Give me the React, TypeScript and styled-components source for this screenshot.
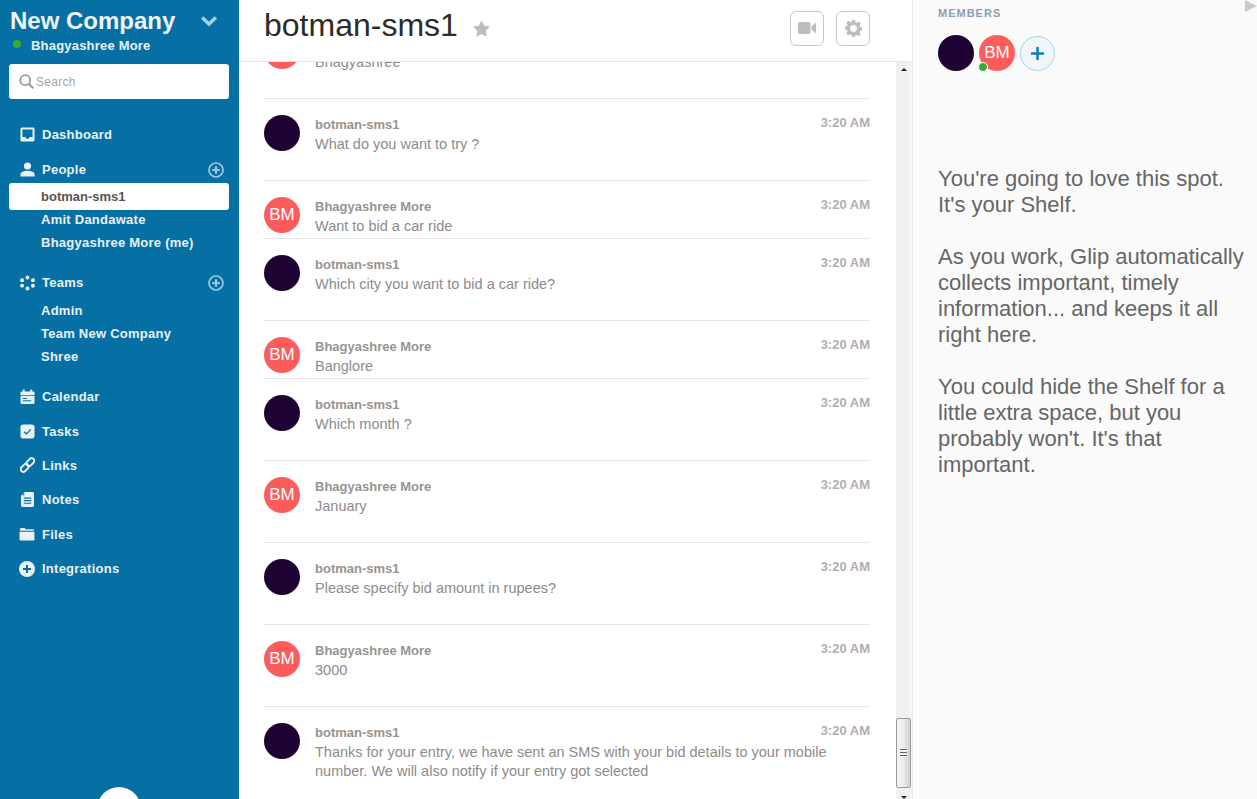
import React from "react";
import styled, { createGlobalStyle } from "styled-components";

const Global = createGlobalStyle`
  html, body { margin: 0; padding: 0; height: 100%; overflow: hidden; background: #fff; }
  body { font-family: "Liberation Sans", Arial, sans-serif; }
  * { box-sizing: border-box; }
`;

const Page = styled.div`
  display: flex;
  width: 1257px;
  height: 799px;
  overflow: hidden;
`;

const Sidebar = styled.aside`
  position: relative;
  width: 239px;
  flex: none;
  background: #0670a4;
  color: #e9f1f5;
  overflow: hidden;
  padding: 0 10px 0 9px;
`;

const CompanyRow = styled.div`
  display: flex;
  align-items: center;
  justify-content: space-between;
  height: 34px;
  padding: 8px 12px 0 1px;
  font-size: 24px;
  font-weight: 700;
  color: #eef3f6;
`;

const UserRow = styled.div`
  display: flex;
  align-items: center;
  height: 22px;
  padding-left: 4px;
  margin-bottom: 8px;
  font-size: 13px;
  font-weight: 700;
  letter-spacing: 0.2px;
  color: #e9f1f5;
`;

const StatusDot = styled.span`
  width: 8px;
  height: 8px;
  border-radius: 50%;
  background: #3da935;
  margin-right: 10px;
  position: relative;
  top: -1px;
`;

const SearchBox = styled.div`
  display: flex;
  align-items: center;
  gap: 2px;
  height: 35px;
  padding-left: 10px;
  background: #fff;
  border-radius: 3px;
  font-size: 12px;
  letter-spacing: 0.3px;
  color: #a5a5a5;
  margin-bottom: 18px;
`;

const NavRow = styled.div<{ $h?: number; $top?: number }>`
  display: flex;
  align-items: center;
  height: ${(p) => p.$h ?? 34.4}px;
  padding: ${(p) => p.$top ?? 0}px 5px 0 10px;
  font-size: 13px;
  font-weight: 700;
  letter-spacing: 0.25px;
`;

const NavIcon = styled.span`
  display: flex;
  align-items: center;
  justify-content: center;
  width: 16px;
  height: 16px;
  margin-right: 7px;
`;

const NavLabel = styled.span`
  flex: 1;
`;

const SubList = styled.div<{ $after: number }>`
  margin-bottom: ${(p) => p.$after}px;
`;

const SubItem = styled.div<{ $active?: boolean }>`
  display: flex;
  align-items: center;
  height: ${(p) => (p.$active ? 27 : 23)}px;
  margin-bottom: ${(p) => (p.$active ? -2 : 0)}px;
  padding-left: 32px;
  border-radius: 3px;
  font-size: 13px;
  font-weight: 700;
  letter-spacing: ${(p) => (p.$active ? 0 : 0.25)}px;
  background: ${(p) => (p.$active ? "#fff" : "transparent")};
  color: ${(p) => (p.$active ? "#5b5353" : "#e9f1f5")};
`;

const BottomBubble = styled.div`
  position: absolute;
  left: 97px;
  top: 787px;
  width: 44px;
  height: 44px;
  border-radius: 50%;
  background: #fff;
`;

const Main = styled.main`
  width: 673px;
  flex: none;
  display: flex;
  flex-direction: column;
  background: #fff;
`;

const Header = styled.header`
  display: flex;
  align-items: center;
  height: 62px;
  flex: none;
  padding: 0 42px 5px 25px;
  border-bottom: 1px solid #e6e6e6;
  position: relative;
  z-index: 1;
  background: #fff;
`;

const Title = styled.h1`
  margin: 0 0 5px;
  font-size: 32px;
  font-weight: 400;
  color: #2b2b2b;
`;

const StarWrap = styled.span`
  display: flex;
  margin-left: 15px;
  flex: 1;
`;

const HeaderButton = styled.button`
  display: flex;
  align-items: center;
  justify-content: center;
  width: 34px;
  height: 35px;
  margin-left: 12px;
  padding: 0;
  border: 1px solid #c8c8c8;
  border-radius: 6px;
  background: #fff;
`;

const ChatArea = styled.div`
  flex: 1;
  min-height: 0;
  display: flex;
`;

const MessageViewport = styled.div`
  flex: 1;
  min-width: 0;
  overflow: hidden;
  padding: 0 26px 0 25px;
`;

const MessageList = styled.div`
  margin-top: -46px;
`;

const Message = styled.article<{ $h: number; $first?: boolean }>`
  display: flex;
  height: ${(p) => p.$h}px;
  padding-top: 16px;
  border-top: ${(p) => (p.$first ? "0" : "1px solid #e6e6e6")};
  margin-top: ${(p) => (p.$first ? "1px" : "0")};
`;

const Avatar = styled.div<{ $kind: "dark" | "red" }>`
  display: flex;
  align-items: center;
  justify-content: center;
  width: 36px;
  height: 36px;
  flex: none;
  border-radius: 50%;
  background: ${(p) => (p.$kind === "dark" ? "#1e0233" : "#fd5c5c")};
  color: #fff;
  font-size: 17px;
`;

const MessageBody = styled.div`
  flex: 1;
  min-width: 0;
  margin-left: 15px;
  padding-top: 1px;
`;

const MessageHead = styled.div`
  display: flex;
  justify-content: space-between;
  align-items: flex-start;
  height: 19px;
  line-height: 18px;
`;

const Author = styled.span`
  font-size: 13px;
  font-weight: 700;
  color: #9a9290;
`;

const Time = styled.span`
  font-size: 13px;
  font-weight: 700;
  color: #b3aeac;
  position: relative;
  top: -2px;
`;

const MessageText = styled.div`
  font-size: 14.5px;
  line-height: 19px;
  color: #8d8b8b;
`;

const Scrollbar = styled.div`
  width: 16px;
  flex: none;
  display: flex;
  flex-direction: column;
  align-items: flex-start;
  background: linear-gradient(to right, #f0f0f0 0 14px, #f8f8f8 14px);
`;

const ScrollSpacer = styled.div`
  flex: 1;
`;

const ScrollArrow = styled.div<{ $down?: boolean }>`
  width: 15px;
  height: ${(p) => (p.$down ? 11 : 15)}px;
  flex: none;
  display: flex;
  align-items: ${(p) => (p.$down ? "flex-start" : "center")};
  justify-content: center;
  padding-top: ${(p) => (p.$down ? 8 : 0)}px;
  &::before {
    content: "";
    border-left: 3.5px solid transparent;
    border-right: 3.5px solid transparent;
    ${(p) => (p.$down ? "border-top: 3.5px solid #222;" : "border-bottom: 3.5px solid #222;")}
  }
`;

const ScrollThumb = styled.div`
  width: 15px;
  height: 70px;
  flex: none;
  display: flex;
  align-items: center;
  justify-content: center;
  border: 1px solid #9a9a9a;
  border-radius: 2px;
  background: linear-gradient(to right, #f4f4f4 0%, #ececec 50%, #cfcfcf 100%);
`;

const Grip = styled.div`
  width: 7px;
  height: 8px;
  background: repeating-linear-gradient(to bottom, #666 0 1px, #eee 1px 3px);
`;

const Shelf = styled.section`
  position: relative;
  flex: 1;
  min-width: 0;
  background: #fafafa;
  border-left: 1px solid #ececec;
  padding: 7px 8px 0 25px;
`;

const ShelfToggle = styled.div`
  position: absolute;
  right: 0;
  top: 0;
  border-left: 12px solid #cbcbcb;
  border-top: 6px solid transparent;
  border-bottom: 6px solid transparent;
`;

const MembersLabel = styled.div`
  font-size: 11px;
  font-weight: 700;
  letter-spacing: 1px;
  line-height: 13px;
  color: #8c9eb4;
  margin-bottom: 15px;
`;

const MembersRow = styled.div`
  display: flex;
  align-items: center;
  gap: 5px;
  margin-bottom: 95px;
`;

const MemberWrap = styled.div`
  position: relative;
  width: 36px;
  height: 36px;
`;

const Presence = styled.span`
  position: absolute;
  left: -1px;
  bottom: -1px;
  width: 10px;
  height: 10px;
  border-radius: 50%;
  background: #3da935;
  border: 1px solid #fff;
`;

const AddMember = styled.button`
  display: flex;
  align-items: center;
  justify-content: center;
  width: 35px;
  height: 35px;
  padding: 0;
  border: 1px solid #a9d3e8;
  border-radius: 50%;
  background: #eef6fa;
`;

const ShelfText = styled.p`
  margin: 0 0 26px;
  font-size: 22px;
  line-height: 26px;
  color: #666;
`;

const ic = "#e9f1f5";
const bg = "#0670a4";

const IconDash = () => (
  <svg width="15" height="15" viewBox="0 0 16 16">
    <path fill={ic} fillRule="evenodd" d="M2 .5h12A1.500 1.500 0 0 1 15.500 2v12a1.500 1.500 0 0 1-1.500 1.500H2A1.500 1.500 0 0 1 .5 14V2A1.500 1.500 0 0 1 2 .5Zm.6 2.200v8h3.200l.9 1.800h2.600l.9-1.800h3.200v-8H2.600Z" />
  </svg>
);
const IconPerson = () => (
  <svg width="15" height="15" viewBox="0 0 16 16">
    <circle cx="8" cy="4.300" r="3.800" fill={ic} />
    <path fill={ic} d="M.5 15.500v-2.300C.5 10.400 4 9.200 8 9.200s7.500 1.200 7.500 4v2.300Z" />
  </svg>
);
const IconTeams = () => (
  <svg width="15" height="16" viewBox="0 0 16 16" fill={ic}>
    <circle cx="8" cy="2.200" r="2.100" />
    <circle cx="13.800" cy="5" r="2.100" />
    <circle cx="13.800" cy="11" r="2.100" />
    <circle cx="8" cy="13.800" r="2.100" />
    <circle cx="2.200" cy="10.800" r="2.100" />
    <circle cx="2.200" cy="5" r="2.100" />
  </svg>
);
const IconCalendar = () => (
  <svg width="15" height="16" viewBox="0 0 16 16">
    <path fill={ic} fillRule="evenodd" d="M3 0h2v2h6V0h2v2h1a1.500 1.500 0 0 1 1.500 1.500V14a1.500 1.500 0 0 1-1.500 1.500H2A1.500 1.500 0 0 1 .5 14V3.500A1.500 1.500 0 0 1 2 2h1V0ZM.5 6v.8h15V6H.5Zm2.500 3v1h4.500V9H3Zm0 2.500v1h9v-1H3Z" />
  </svg>
);
const IconTasks = () => (
  <svg width="15" height="15" viewBox="0 0 16 16">
    <rect x=".5" y=".5" width="15" height="15" rx="3" fill={ic} />
    <path d="M4.500 8.200 7 10.500l4.500-4.800" fill="none" stroke={bg} strokeWidth="1.400" />
  </svg>
);
const IconLink = () => (
  <svg width="15" height="16" viewBox="0 0 16 16" fill="none" stroke={ic} strokeWidth="2">
    <rect x="-4.800" y="-2.800" width="9.600" height="5.600" rx="2.800" transform="translate(5 11) rotate(-45)" />
    <rect x="-4.800" y="-2.800" width="9.600" height="5.600" rx="2.800" transform="translate(11 5) rotate(-45)" />
  </svg>
);
const IconNote = () => (
  <svg width="13" height="15" viewBox="0 0 14 16">
    <path fill={ic} d="M4 0h8.500A1.500 1.500 0 0 1 14 1.500v13a1.500 1.500 0 0 1-1.500 1.500h-11A1.500 1.500 0 0 1 0 14.500V4Z" />
    <path stroke={bg} strokeWidth="1.200" d="M3 6.500h8M3 9.200h8M3 12h8" />
    <path fill={bg} d="M3.500 1 1 3.500h2.500Z" />
  </svg>
);
const IconFiles = () => (
  <svg width="16" height="14" viewBox="0 0 17 15">
    <path fill={ic} d="M1 3 1.500 1h4.500l1 1.500h8.500l.5 1.500H1Z" />
    <path fill={ic} d="M.5 5.200h16v8.300a1 1 0 0 1-1 1h-14a1 1 0 0 1-1-1Z" />
  </svg>
);
const IconIntegrations = () => (
  <svg width="16" height="16" viewBox="0 0 16 16">
    <circle cx="8" cy="8" r="8" fill={ic} />
    <path stroke={bg} strokeWidth="2" d="M4 8h8M8 4v8" />
  </svg>
);
const IconAdd = () => (
  <svg width="16" height="16" viewBox="0 0 16 16" fill="none" stroke="#9cc6db">
    <circle cx="8" cy="8" r="7" strokeWidth="1.700" />
    <path strokeWidth="2.200" d="M4.200 8h7.600M8 4.200v7.600" />
  </svg>
);

type Msg = { who: "bot" | "bm"; text: React.ReactNode; h: number };

const messages: Msg[] = [
  { who: "bm", text: "Bhagyashree", h: 81 },
  { who: "bot", text: "What do you want to try ?", h: 82 },
  { who: "bm", text: "Want to bid a car ride", h: 58 },
  { who: "bot", text: "Which city you want to bid a car ride?", h: 82 },
  { who: "bm", text: "Banglore", h: 58 },
  { who: "bot", text: "Which month ?", h: 82 },
  { who: "bm", text: "January", h: 82 },
  { who: "bot", text: "Please specify bid amount in rupees?", h: 82 },
  { who: "bm", text: "3000", h: 82 },
  {
    who: "bot",
    text: "Thanks for your entry, we have sent an SMS with your bid details to your mobile number. We will also notify if your entry got selected",
    h: 92,
  },
];

export default function App() {
  return (
    <Page>
      <Global />
      <Sidebar>
        <CompanyRow>
          <span>New Company</span>
          <svg width="16" height="12" viewBox="0 0 16 12" fill="none" stroke="#a9cfe2" strokeWidth="3.500">
            <path d="M1.200 2.500 8 9l6.800-6.500" />
          </svg>
        </CompanyRow>
        <UserRow>
          <StatusDot />
          Bhagyashree More
        </UserRow>
        <SearchBox>
          <svg width="15" height="15" viewBox="0 0 15 15" fill="none" stroke="#9a9a9a" strokeWidth="1.800">
            <circle cx="6.200" cy="6.200" r="5" />
            <path strokeWidth="2.200" d="m9.800 9.800 4.400 4.400" />
          </svg>
          <span>Search</span>
        </SearchBox>
        <NavRow>
          <NavIcon><IconDash /></NavIcon>
          <NavLabel>Dashboard</NavLabel>
        </NavRow>
        <NavRow $h={31.6} $top={5}>
          <NavIcon><IconPerson /></NavIcon>
          <NavLabel>People</NavLabel>
          <IconAdd />
        </NavRow>
        <SubList $after={12.5}>
          <SubItem $active>botman-sms1</SubItem>
          <SubItem>Amit Dandawate</SubItem>
          <SubItem>Bhagyashree More (me)</SubItem>
        </SubList>
        <NavRow $h={33}>
          <NavIcon><IconTeams /></NavIcon>
          <NavLabel>Teams</NavLabel>
          <IconAdd />
        </NavRow>
        <SubList $after={11}>
          <SubItem>Admin</SubItem>
          <SubItem>Team New Company</SubItem>
          <SubItem>Shree</SubItem>
        </SubList>
        <NavRow>
          <NavIcon><IconCalendar /></NavIcon>
          <NavLabel>Calendar</NavLabel>
        </NavRow>
        <NavRow>
          <NavIcon><IconTasks /></NavIcon>
          <NavLabel>Tasks</NavLabel>
        </NavRow>
        <NavRow>
          <NavIcon><IconLink /></NavIcon>
          <NavLabel>Links</NavLabel>
        </NavRow>
        <NavRow>
          <NavIcon><IconNote /></NavIcon>
          <NavLabel>Notes</NavLabel>
        </NavRow>
        <NavRow>
          <NavIcon><IconFiles /></NavIcon>
          <NavLabel>Files</NavLabel>
        </NavRow>
        <NavRow>
          <NavIcon><IconIntegrations /></NavIcon>
          <NavLabel>Integrations</NavLabel>
        </NavRow>
        <BottomBubble />
      </Sidebar>

      <Main>
        <Header>
          <Title>botman-sms1</Title>
          <StarWrap>
            <svg width="17" height="17" viewBox="0 0 24 23">
              <path fill="#bdbdbd" d="m12 0 3.700 7.600 8.300 1.200-6 5.900 1.400 8.300L12 19.100 4.600 23 6 14.700 0 8.800l8.300-1.200Z" />
            </svg>
          </StarWrap>
          <HeaderButton aria-label="Video">
            <svg width="18" height="14" viewBox="0 0 18 14" fill="#bdbdbd">
              <rect x="0" y="1" width="12.500" height="12" rx="2" />
              <path d="M13.500 5.500 18 1.500v11l-4.500-4z" />
            </svg>
          </HeaderButton>
          <HeaderButton aria-label="Settings">
            <svg width="17" height="17" viewBox="0 0 18 18">
              <path
                fill="#bdbdbd"
                fillRule="evenodd"
                d="M7.500 0h3l.5 2.400 1.500.6 2.100-1.300 2.100 2.100L15.400 5.900l.6 1.500 2 .5v3l-2 .5-.6 1.500 1.300 2.100-2.100 2.100-2.100-1.300-1.500.6-.5 2.400h-3L7 15.600l-1.500-.6-2.100 1.300-2.100-2.100L2.600 12.100 2 10.600 0 10.100v-3l2-.5.600-1.500L1.300 3l2.100-2.100 2.100 1.300L7 2.400ZM9 5.400a3.600 3.600 0 1 0 0 7.200 3.600 3.600 0 0 0 0-7.200Z"
              />
            </svg>
          </HeaderButton>
        </Header>
        <ChatArea>
          <MessageViewport>
            <MessageList>
              {messages.map((m, i) => (
                <Message key={i} $h={m.h} $first={i === 0}>
                  {m.who === "bot" ? <Avatar $kind="dark" /> : <Avatar $kind="red">BM</Avatar>}
                  <MessageBody>
                    <MessageHead>
                      <Author>{m.who === "bot" ? "botman-sms1" : "Bhagyashree More"}</Author>
                      <Time>3:20 AM</Time>
                    </MessageHead>
                    <MessageText>{m.text}</MessageText>
                  </MessageBody>
                </Message>
              ))}
            </MessageList>
          </MessageViewport>
          <Scrollbar>
            <ScrollArrow />
            <ScrollSpacer />
            <ScrollThumb>
              <Grip />
            </ScrollThumb>
            <ScrollArrow $down />
          </Scrollbar>
        </ChatArea>
      </Main>

      <Shelf>
        <ShelfToggle />
        <MembersLabel>MEMBERS</MembersLabel>
        <MembersRow>
          <Avatar $kind="dark" />
          <MemberWrap>
            <Avatar $kind="red">BM</Avatar>
            <Presence />
          </MemberWrap>
          <AddMember aria-label="Add member">
            <svg width="13" height="13" viewBox="0 0 13 13">
              <path stroke="#0f7db8" strokeWidth="2.500" d="M0 6.500h13M6.500 0v13" />
            </svg>
          </AddMember>
        </MembersRow>
        <ShelfText>
          You're going to love this spot.
          <br />
          It's your Shelf.
        </ShelfText>
        <ShelfText>
          As you work, Glip automatically collects important, timely information... and keeps it all right here.
        </ShelfText>
        <ShelfText>
          You could hide the Shelf for a little extra space, but you probably won't. It's that important.
        </ShelfText>
      </Shelf>
    </Page>
  );
}
